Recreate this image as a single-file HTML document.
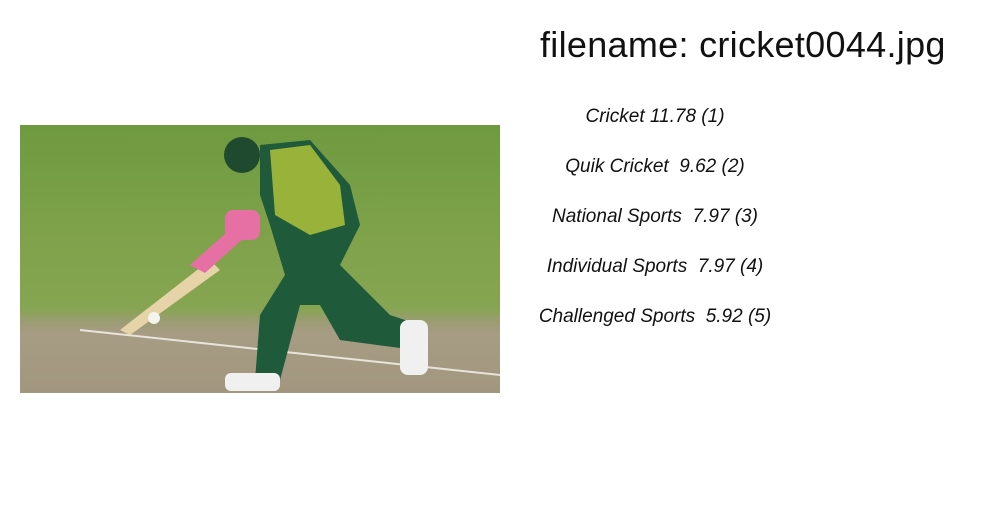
<!DOCTYPE html>
<html><head><style>
body{margin:0;width:1000px;height:520px;background:#fff;position:relative;overflow:hidden;font-family:"Liberation Sans",sans-serif;}
#t{position:absolute;left:540px;top:24px;font-size:36px;color:#111;white-space:nowrap;letter-spacing:0.3px;}
.l{position:absolute;width:240px;left:535px;text-align:center;font-style:italic;font-size:19px;color:#111;white-space:nowrap;}
#img{position:absolute;left:20px;top:125px;width:480px;height:268px;overflow:hidden;
background:linear-gradient(180deg,#6f9a3f 0%,#7ea24a 40%,#86a552 68%,#9a9a70 78%,#a39a80 100%);}
</style></head><body>
<div id="t">filename: cricket0044.jpg</div>
<div class="l" style="top:106px">Cricket 11.78 (1)</div>
<div class="l" style="top:156px">Quik Cricket&nbsp; 9.62 (2)</div>
<div class="l" style="top:206px">National Sports&nbsp; 7.97 (3)</div>
<div class="l" style="top:256px">Individual Sports&nbsp; 7.97 (4)</div>
<div class="l" style="top:306px">Challenged Sports&nbsp; 5.92 (5)</div>
<div id="img">
<svg width="480" height="268" viewBox="0 0 480 268">
<defs><linearGradient id="g" x1="0" y1="0" x2="0" y2="1"><stop offset="0" stop-color="#a69c84" stop-opacity="0"/><stop offset="0.3" stop-color="#a69c84"/><stop offset="1" stop-color="#a2977e"/></linearGradient></defs>
<rect x="0" y="185" width="480" height="83" fill="url(#g)"/>
<path d="M60 205 L480 250" stroke="#e8e4dc" stroke-width="2"/>
<path d="M100 205 L190 135 L200 145 L110 210Z" fill="#e6d4a8"/>
<path d="M170 140 L215 100 L225 112 L185 148Z" fill="#e66fa3"/>
<circle cx="134" cy="193" r="6" fill="#f4f4ee"/>
<path d="M240 20 L290 15 L330 60 L340 100 L320 140 L370 190 L400 200 L395 225 L320 215 L300 180 L280 180 L260 255 L235 255 L240 190 L265 150 L250 100 L240 70Z" fill="#1f5a3a"/>
<path d="M250 25 L290 20 L320 60 L325 100 L290 110 L255 90Z" fill="#98b23a"/>
<circle cx="222" cy="30" r="18" fill="#1f4a30"/>
<rect x="205" y="85" width="35" height="30" rx="8" fill="#e66fa3"/>
<rect x="380" y="195" width="28" height="55" rx="8" fill="#f0f0f0"/>
<rect x="205" y="248" width="55" height="18" rx="6" fill="#f0f0f0"/>
</svg>
</div>
</body></html>
